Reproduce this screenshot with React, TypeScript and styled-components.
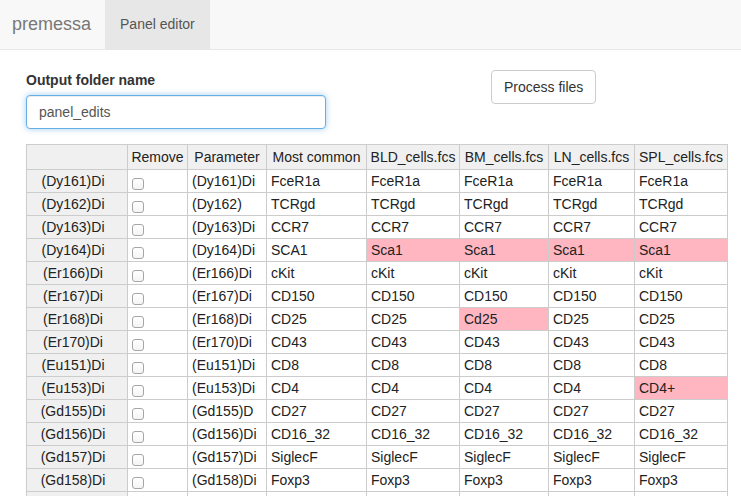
import React from "react";
import styled, { createGlobalStyle } from "styled-components";

const Global = createGlobalStyle`
  html, body {
    margin: 0;
    padding: 0;
    overflow: hidden;
    background: #fff;
  }
  body {
    font-family: "Liberation Sans", Arial, sans-serif;
    font-size: 14px;
    color: #333;
  }
`;

const Navbar = styled.nav`
  display: flex;
  height: 49px;
  background: #f8f8f8;
  border-bottom: 1px solid #e7e7e7;
`;

const Brand = styled.div`
  padding: 0 14px 0 12px;
  font-size: 18px;
  line-height: 49px;
  color: #777;
`;

const Tab = styled.div<{ $active?: boolean }>`
  padding: 0 15px;
  line-height: 49px;
  font-size: 14px;
  color: #555;
  background: ${(p) => (p.$active ? "#e7e7e7" : "transparent")};
`;

const Main = styled.main`
  padding: 20px 0 0 26px;
`;

const FormRow = styled.div`
  display: flex;
  align-items: flex-start;
  gap: 165px;
  margin-bottom: 15px;
`;

const FormGroup = styled.div`
  display: flex;
  flex-direction: column;
  width: 300px;
`;

const Label = styled.label`
  font-weight: bold;
  font-size: 14px;
  line-height: 20px;
  color: #333;
  margin-bottom: 5px;
`;

const TextInput = styled.input`
  box-sizing: border-box;
  width: 300px;
  height: 34px;
  padding: 6px 12px;
  font-family: "Liberation Sans", Arial, sans-serif;
  font-size: 14px;
  color: #555;
  border: 1px solid #66afe9;
  border-radius: 4px;
  outline: none;
  box-shadow: inset 0 1px 1px rgba(0, 0, 0, 0.075),
    0 0 6px rgba(102, 175, 233, 0.6);
`;

const Button = styled.button`
  box-sizing: border-box;
  height: 34px;
  padding: 6px 12px;
  font-family: "Liberation Sans", Arial, sans-serif;
  font-size: 14px;
  color: #333;
  background: #fff;
  border: 1px solid #ccc;
  border-radius: 4px;
`;

const Table = styled.table`
  table-layout: fixed;
  width: 702px;
  border-collapse: separate;
  border-spacing: 0;
  border-left: 1px solid #ccc;
  border-top: 1px solid #ccc;
  font-size: 14px;
`;

const Th = styled.th`
  box-sizing: border-box;
  height: 25px;
  padding: 0 2px;
  font-weight: normal;
  text-align: center;
  white-space: nowrap;
  overflow: hidden;
  color: #222;
  background: #f0f0f0;
  border-right: 1px solid #ccc;
  border-bottom: 1px solid #ccc;
`;

const RowHead = styled.th`
  box-sizing: border-box;
  height: 23px;
  padding: 0 8px 0 0;
  font-weight: normal;
  text-align: center;
  line-height: 22px;
  color: #222;
  background: #f0f0f0;
  border-right: 1px solid #ccc;
  border-bottom: 1px solid #ccc;
`;

const Td = styled.td<{ $flag?: boolean }>`
  box-sizing: border-box;
  height: 23px;
  padding: 0 4px;
  line-height: 22px;
  white-space: nowrap;
  overflow: hidden;
  color: #222;
  background: ${(p) => (p.$flag ? "#ffb6c1" : "#fff")};
  border-right: 1px solid #ccc;
  border-bottom: 1px solid #ccc;
  vertical-align: top;
`;

const Check = styled.input`
  appearance: none;
  display: block;
  box-sizing: border-box;
  width: 12px;
  height: 12px;
  margin: 8px 0 0 0;
  border: 1px solid #a6a6a6;
  border-radius: 3px;
  background: linear-gradient(#fff, #f4f4f4);
`;

const widths = [101, 60, 79, 100, 93, 89, 86, 93];
const headers = ["", "Remove", "Parameter", "Most common", "BLD_cells.fcs", "BM_cells.fcs", "LN_cells.fcs", "SPL_cells.fcs"];

type Row = { name: string; param: string; common: string; files: string[]; flags?: boolean[]; check?: boolean };

const same = (v: string) => [v, v, v, v];

const rows: Row[] = [
  { name: "(Dy161)Di", param: "(Dy161)Di", common: "FceR1a", files: same("FceR1a") },
  { name: "(Dy162)Di", param: "(Dy162)", common: "TCRgd", files: same("TCRgd") },
  { name: "(Dy163)Di", param: "(Dy163)Di", common: "CCR7", files: same("CCR7") },
  { name: "(Dy164)Di", param: "(Dy164)Di", common: "SCA1", files: same("Sca1"), flags: [true, true, true, true] },
  { name: "(Er166)Di", param: "(Er166)Di", common: "cKit", files: same("cKit") },
  { name: "(Er167)Di", param: "(Er167)Di", common: "CD150", files: same("CD150") },
  { name: "(Er168)Di", param: "(Er168)Di", common: "CD25", files: ["CD25", "Cd25", "CD25", "CD25"], flags: [false, true, false, false] },
  { name: "(Er170)Di", param: "(Er170)Di", common: "CD43", files: same("CD43") },
  { name: "(Eu151)Di", param: "(Eu151)Di", common: "CD8", files: same("CD8") },
  { name: "(Eu153)Di", param: "(Eu153)Di", common: "CD4", files: ["CD4", "CD4", "CD4", "CD4+"], flags: [false, false, false, true] },
  { name: "(Gd155)Di", param: "(Gd155)D", common: "CD27", files: same("CD27") },
  { name: "(Gd156)Di", param: "(Gd156)Di", common: "CD16_32", files: same("CD16_32") },
  { name: "(Gd157)Di", param: "(Gd157)Di", common: "SiglecF", files: same("SiglecF") },
  { name: "(Gd158)Di", param: "(Gd158)Di", common: "Foxp3", files: same("Foxp3") },
  { name: "next", param: "", common: "", files: same(""), check: false },
];

export default function App() {
  return (
    <>
      <Global />
      <Navbar>
        <Brand>premessa</Brand>
        <Tab $active>Panel editor</Tab>
      </Navbar>
      <Main>
        <FormRow>
          <FormGroup>
            <Label htmlFor="outdir">Output folder name</Label>
            <TextInput id="outdir" defaultValue="panel_edits" />
          </FormGroup>
          <Button>Process files</Button>
        </FormRow>
        <Table>
          <colgroup>
            {widths.map((w, i) => (
              <col key={i} style={{ width: w }} />
            ))}
          </colgroup>
          <thead>
            <tr>
              {headers.map((h, i) => (
                <Th key={i}>{h}</Th>
              ))}
            </tr>
          </thead>
          <tbody>
            {rows.map((r) => (
              <tr key={r.name}>
                <RowHead>{r.name === "next" ? "" : r.name}</RowHead>
                <Td>{r.check === false ? null : <Check type="checkbox" />}</Td>
                <Td>{r.param}</Td>
                <Td>{r.common}</Td>
                {r.files.map((f, i) => (
                  <Td key={i} $flag={r.flags?.[i]}>
                    {f}
                  </Td>
                ))}
              </tr>
            ))}
          </tbody>
        </Table>
      </Main>
    </>
  );
}
